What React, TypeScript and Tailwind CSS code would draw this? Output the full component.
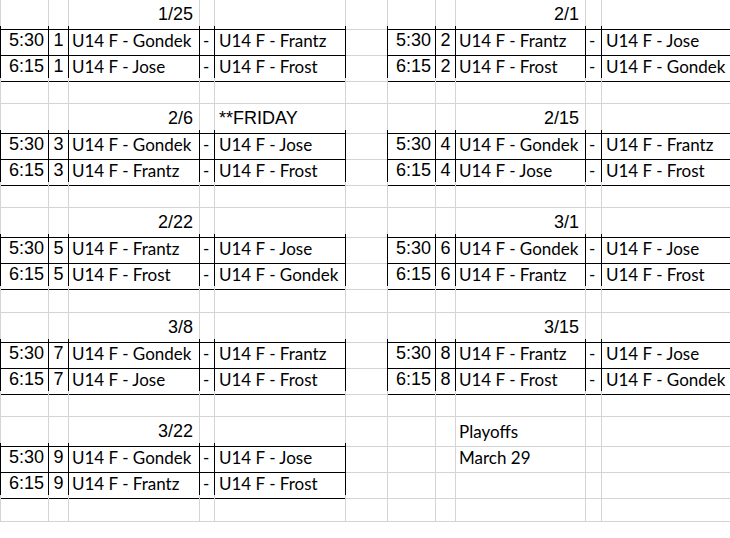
import React from "react";

type Match = { t: string; n: string; a: string; b: string };
type Side = { date?: string; note?: string; matches?: Match[]; extra?: [string, string] };
type Block = { left: Side; right: Side; spacer: string };

const blocks: Block[] = [
  {
    left: {
      date: "1/25",
      matches: [
        { t: "5:30", n: "1", a: "U14 F - Gondek", b: "U14 F - Frantz" },
        { t: "6:15", n: "1", a: "U14 F - Jose", b: "U14 F - Frost" },
      ],
    },
    right: {
      date: "2/1",
      matches: [
        { t: "5:30", n: "2", a: "U14 F - Frantz", b: "U14 F - Jose" },
        { t: "6:15", n: "2", a: "U14 F - Frost", b: "U14 F - Gondek" },
      ],
    },
    spacer: "h-[26px]",
  },
  {
    left: {
      date: "2/6",
      note: "**FRIDAY",
      matches: [
        { t: "5:30", n: "3", a: "U14 F - Gondek", b: "U14 F - Jose" },
        { t: "6:15", n: "3", a: "U14 F - Frantz", b: "U14 F - Frost" },
      ],
    },
    right: {
      date: "2/15",
      matches: [
        { t: "5:30", n: "4", a: "U14 F - Gondek", b: "U14 F - Frantz" },
        { t: "6:15", n: "4", a: "U14 F - Jose", b: "U14 F - Frost" },
      ],
    },
    spacer: "h-[26px]",
  },
  {
    left: {
      date: "2/22",
      matches: [
        { t: "5:30", n: "5", a: "U14 F - Frantz", b: "U14 F - Jose" },
        { t: "6:15", n: "5", a: "U14 F - Frost", b: "U14 F - Gondek" },
      ],
    },
    right: {
      date: "3/1",
      matches: [
        { t: "5:30", n: "6", a: "U14 F - Gondek", b: "U14 F - Jose" },
        { t: "6:15", n: "6", a: "U14 F - Frantz", b: "U14 F - Frost" },
      ],
    },
    spacer: "h-[27px]",
  },
  {
    left: {
      date: "3/8",
      matches: [
        { t: "5:30", n: "7", a: "U14 F - Gondek", b: "U14 F - Frantz" },
        { t: "6:15", n: "7", a: "U14 F - Jose", b: "U14 F - Frost" },
      ],
    },
    right: {
      date: "3/15",
      matches: [
        { t: "5:30", n: "8", a: "U14 F - Frantz", b: "U14 F - Jose" },
        { t: "6:15", n: "8", a: "U14 F - Frost", b: "U14 F - Gondek" },
      ],
    },
    spacer: "h-[26px]",
  },
  {
    left: {
      date: "3/22",
      matches: [
        { t: "5:30", n: "9", a: "U14 F - Gondek", b: "U14 F - Jose" },
        { t: "6:15", n: "9", a: "U14 F - Frantz", b: "U14 F - Frost" },
      ],
    },
    right: { extra: ["Playoffs", "March 29"] },
    spacer: "h-[27px]",
  },
];

const ROW =
  "grid grid-cols-[49px_20px_131px_15px_131px_42px_48px_20px_130px_16px_140px]";

const ARIAL = "font-['Liberation_Sans',Arial,sans-serif] text-[18px]";
const CAL = "font-['Lato','Open_Sans',sans-serif] text-[17px]";

function Cell({
  r = false,
  b = false,
  l,
  className = "",
  children,
}: {
  r?: boolean;
  b?: boolean;
  l?: "black" | "gray";
  className?: string;
  children?: React.ReactNode;
}) {
  const rc = r ? "border-r-black" : "border-r-[#d4d4d4]";
  const bc = b ? "border-b-black" : "border-b-[#d4d4d4]";
  const lc = l === "black" ? "border-l border-l-black" : l === "gray" ? "border-l border-l-[#d4d4d4]" : "";
  return (
    <div
      className={`h-full border-r border-b ${rc} ${bc} ${lc} overflow-visible whitespace-nowrap leading-[29px] text-black ${className}`}
    >
      {children}
    </div>
  );
}

function HeaderRow({ blk }: { blk: Block }) {
  const L = !!blk.left.matches;
  const R = !!blk.right.matches;
  return (
    <div className={`${ROW} h-[26px]`}>
      <Cell l="gray" b={L} />
      <Cell b={L} />
      <Cell b={L} className={`${ARIAL} text-right pr-[6px]`}>
        {blk.left.date}
      </Cell>
      <Cell b={L} />
      <Cell b={L} className={`${ARIAL} pl-[4px]`}>
        {blk.left.note}
      </Cell>
      <Cell />
      <Cell b={R} />
      <Cell b={R} />
      <Cell b={R} className={`${R ? ARIAL + " text-right pr-[6px]" : CAL + " pl-[3px]"}`}>
        {R ? blk.right.date : blk.right.extra?.[0]}
      </Cell>
      <Cell b={R} />
      <Cell b={R} />
    </div>
  );
}

function MatchRow({ blk, i }: { blk: Block; i: number }) {
  const lm = blk.left.matches?.[i];
  const rm = blk.right.matches?.[i];
  return (
    <div className={`${ROW} h-[26px]`}>
      <Cell l={lm ? "black" : "gray"} r={!!lm} b={!!lm} className={`${ARIAL} text-right pr-[4px]`}>
        {lm?.t}
      </Cell>
      <Cell r={!!lm} b={!!lm} className={`${ARIAL} text-center`}>
        {lm?.n}
      </Cell>
      <Cell r={!!lm} b={!!lm} className={`${CAL} pl-[3px]`}>
        {lm?.a}
      </Cell>
      <Cell r={!!lm} b={!!lm} className={`${CAL} pl-[3px]`}>
        {lm ? "-" : ""}
      </Cell>
      <Cell r={!!lm} b={!!lm} className={`${CAL} pl-[4px]`}>
        {lm?.b}
      </Cell>
      <Cell r={!!rm} />
      <Cell r={!!rm} b={!!rm} className={`${ARIAL} text-right pr-[4px]`}>
        {rm?.t}
      </Cell>
      <Cell r={!!rm} b={!!rm} className={`${ARIAL} text-center`}>
        {rm?.n}
      </Cell>
      <Cell r={!!rm} b={!!rm} className={`${CAL} pl-[3px]`}>
        {rm ? rm.a : i === 0 ? blk.right.extra?.[1] : ""}
      </Cell>
      <Cell r={!!rm} b={!!rm} className={`${CAL} pl-[3px]`}>
        {rm ? "-" : ""}
      </Cell>
      <Cell r={!!rm} b={!!rm} className={`${CAL} pl-[4px]`}>
        {rm?.b}
      </Cell>
    </div>
  );
}

function SpacerRow({ h }: { h: string }) {
  return (
    <div className={`${ROW} ${h}`}>
      <Cell l="gray" />
      <Cell />
      <Cell />
      <Cell />
      <Cell />
      <Cell />
      <Cell />
      <Cell />
      <Cell />
      <Cell />
      <Cell />
    </div>
  );
}

export default function App() {
  return (
    <div className="w-[730px] h-[538px] overflow-hidden bg-white">
      <div className="flex flex-col w-[742px]">
        {blocks.map((blk, k) => (
          <React.Fragment key={k}>
            <HeaderRow blk={blk} />
            <MatchRow blk={blk} i={0} />
            <MatchRow blk={blk} i={1} />
            <SpacerRow h={blk.spacer} />
          </React.Fragment>
        ))}
      </div>
    </div>
  );
}
